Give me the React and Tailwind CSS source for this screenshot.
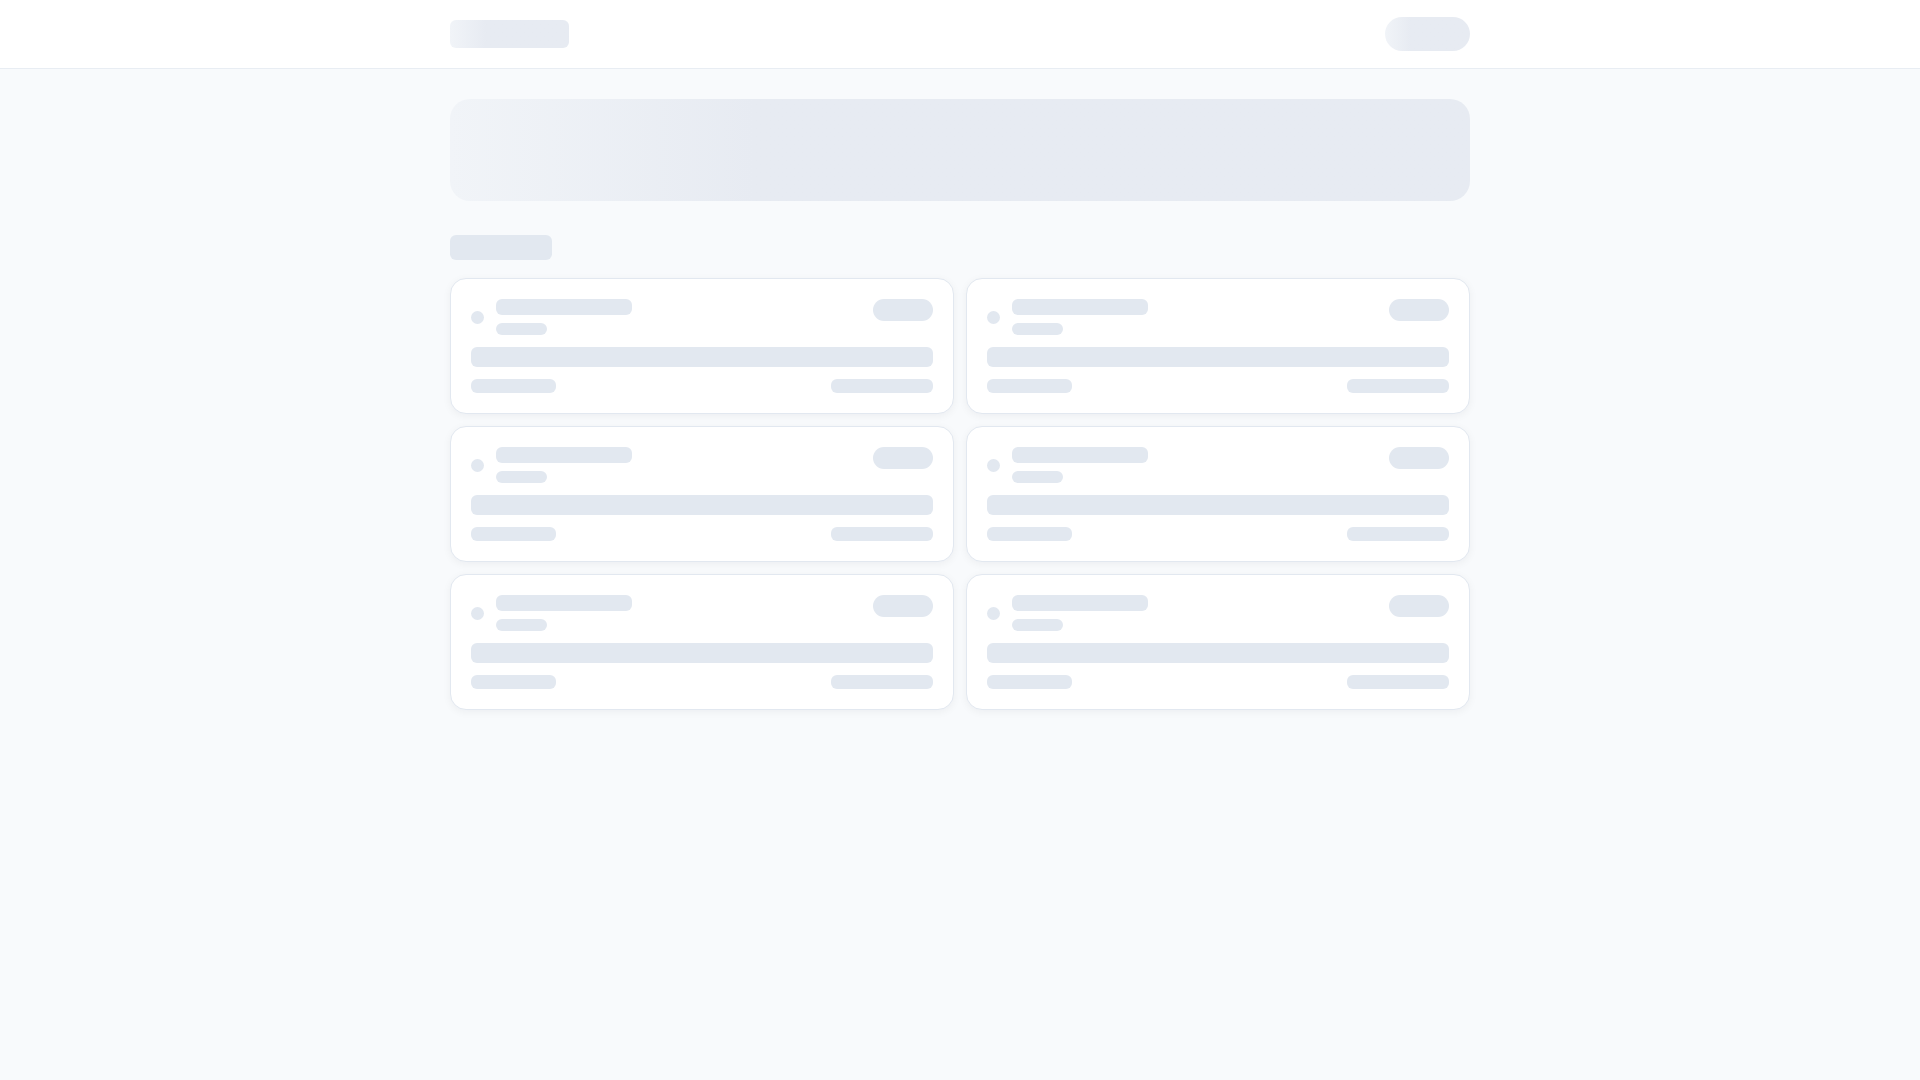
import React from 'react'

const shimmer = 'bg-linear-to-r from-[#f1f4f8] to-[#e7ebf2] to-30%'

function SkeletonCard() {
  return (
    <div className="rounded-2xl border border-slate-200 bg-white p-5 shadow-[0_2px_8px_rgba(15,23,42,0.05)]">
      <div className="flex items-center justify-between">
        <div className="flex items-center gap-3">
          <div className="h-[13px] w-[13px] rounded-full bg-slate-200" />
          <div className="flex flex-col gap-2">
            <div className="h-4 w-[136px] rounded-md bg-slate-200" />
            <div className="h-3 w-[51px] rounded-md bg-slate-200" />
          </div>
        </div>
        <div className="-mt-3.5 h-[22px] w-[60px] rounded-full bg-slate-200" />
      </div>
      <div className="mt-3 h-5 w-full rounded-md bg-slate-200" />
      <div className="mt-3 flex items-center justify-between">
        <div className="h-3.5 w-[85px] rounded-md bg-slate-200" />
        <div className="h-3.5 w-[102px] rounded-md bg-slate-200" />
      </div>
    </div>
  )
}

export default function App() {
  return (
    <div className="min-h-screen bg-slate-50 font-['Inter',sans-serif]" aria-busy="true">
      <header className="h-[69px] border-b border-slate-200/80 bg-white">
        <div className="mx-auto flex h-full w-[1020px] items-center justify-between">
          <div className={`h-7 w-[119px] rounded-md ${shimmer}`} />
          <div className={`h-[34px] w-[85px] rounded-full ${shimmer}`} />
        </div>
      </header>

      <main className="mx-auto w-[1020px] pt-[30px] pb-16">
        <div className={`h-[102px] w-full rounded-[20px] ${shimmer}`} />

        <div className="mt-[34px] mb-[18px] h-[25px] w-[102px] rounded-md bg-slate-200" />

        <div className="grid grid-cols-2 gap-3">
          {Array.from({ length: 6 }).map((_, i) => (
            <SkeletonCard key={i} />
          ))}
        </div>
      </main>
    </div>
  )
}
